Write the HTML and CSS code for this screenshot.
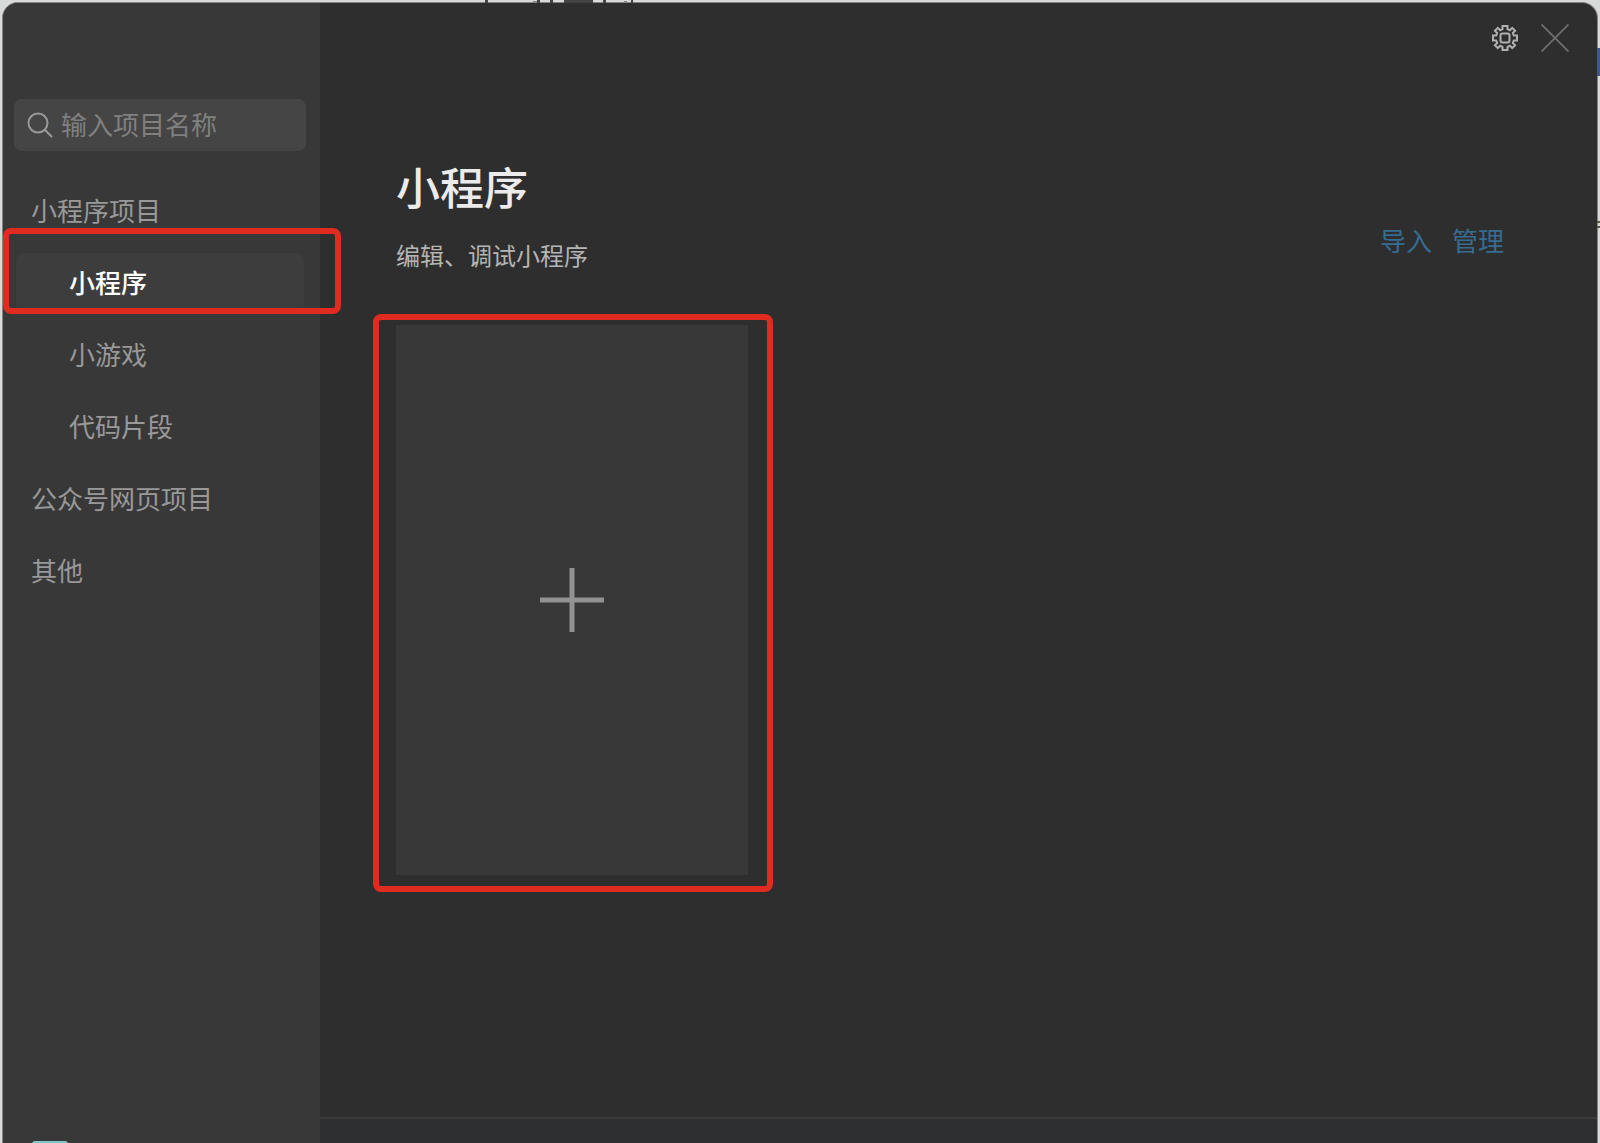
FILE: index.html
```
<!DOCTYPE html>
<html lang="zh-CN">
<head>
    <meta charset="UTF-8">
    <meta name="viewport" content="width=device-width, initial-scale=1.0">
    <title>小程序</title>
    <link rel="stylesheet" href="styles.css">
</head>
<body>
    <!-- page behind the window -->
    <svg class="behind-top" width="160" height="3" viewBox="0 0 160 3" aria-hidden="true">
        <path fill="#444" d="M5 0h3v3H5zM57 0h3v3h-3zM70 0h3v3h-3zM84 0h29v3H84zM123 0h3v3h-3zM151 0h2v3h-2z"/>
        <path fill="#8a8a8a" d="M53 1h4v2h-4zM144 1h3v2h-3z"/>
    </svg>
    <svg class="behind-right" width="3" height="190" viewBox="0 0 3 190" aria-hidden="true">
        <path fill="#3f5a85" d="M0 0h3v28H0z"/>
        <path fill="#5c5a4c" d="M0 173h3v2H0zM0 178h3v2H0z"/>
    </svg>

    <div class="window">
        <aside class="sidebar">
            <label class="search">
                <svg width="26" height="26" viewBox="0 0 26 26" fill="none" stroke="#999" stroke-width="2" aria-hidden="true">
                    <circle cx="11" cy="11" r="9.5"/>
                    <path d="M17.8 17.8L25 25"/>
                </svg>
                <input type="text" placeholder="输入项目名称" aria-label="输入项目名称">
            </label>

            <nav class="menu">
                <a class="menu-item" href="#">小程序项目</a>
                <a class="menu-item sub active" href="#">小程序</a>
                <a class="menu-item sub" href="#">小游戏</a>
                <a class="menu-item sub" href="#">代码片段</a>
                <a class="menu-item" href="#">公众号网页项目</a>
                <a class="menu-item" href="#">其他</a>
            </nav>

            <div class="user">
                <div class="avatar"></div>
            </div>
        </aside>

        <main class="main">
            <div class="toolbar">
                <button class="icon-button" type="button" aria-label="设置">
                    <svg width="28" height="28" viewBox="0 0 28 28" fill="none" stroke="#b0b0b0" stroke-width="2">
                        <path d="M11.5 2h5v3.2l2.4 1 2.3-2.3 2.9 2.9-2.3 2.3 1 2.4H26v5h-3.2l-1 2.4 2.3 2.3-2.9 2.9-2.3-2.3-2.4 1V26h-5v-3.2l-2.4-1-2.3 2.3-2.9-2.9 2.3-2.3-1-2.4H2v-5h3.2l1-2.4-2.3-2.3 2.9-2.9 2.3 2.3 2.4-1z"/>
                        <rect x="9.5" y="9.5" width="9" height="9" rx="2"/>
                    </svg>
                </button>
                <button class="icon-button" type="button" aria-label="关闭">
                    <svg width="28" height="28" viewBox="0 0 28 28" fill="none" stroke="#6e6e6e" stroke-width="1.8">
                        <path d="M.5.5l27 27M27.5.5l-27 27"/>
                    </svg>
                </button>
            </div>

            <div class="content">
                <header class="page-header">
                    <div>
                        <h1>小程序</h1>
                        <p>编辑、调试小程序</p>
                    </div>
                    <div class="actions">
                        <a href="#">导入</a>
                        <a href="#">管理</a>
                    </div>
                </header>

                <button class="add-card" type="button" aria-label="新建小程序">
                    <svg width="64" height="64" viewBox="0 0 64 64" stroke="#929292" stroke-width="5">
                        <path d="M32 0v64M0 32h64"/>
                    </svg>
                </button>
            </div>

            <footer class="footer"></footer>
        </main>
    </div>
</body>
</html>
```
FILE: styles.css
```
* {
    margin: 0;
    padding: 0;
    box-sizing: border-box;
}

body {
    height: 100vh;
    padding: 2px 2px 0;
    overflow: hidden;
    background: #d8dada;
    color: #999;
    font-family: "Noto Sans CJK SC", sans-serif;
    font-size: 26px;
    line-height: 36px;
}

a {
    color: inherit;
    text-decoration: none;
}

button {
    border: none;
    background: none;
    cursor: pointer;
}

svg {
    display: block;
    flex-shrink: 0;
}

.behind-top {
    position: absolute;
    top: 0;
    left: 480px;
}

.behind-right {
    position: absolute;
    top: 48px;
    right: 0;
}

.window {
    display: flex;
    height: 100%;
    overflow: hidden;
    border: 1px solid #858585;
    border-bottom: none;
    border-radius: 16px 16px 0 0;
    background: #2e2e2e;
}

/* Sidebar */
.sidebar {
    display: flex;
    flex-direction: column;
    width: 317px;
    flex-shrink: 0;
    padding: 96px 14px 0 11px;
    background: #383838;
}

.search {
    display: flex;
    align-items: center;
    gap: 8px;
    height: 52px;
    padding: 0 13px;
    border-radius: 8px;
    background: #454545;
}

.search input {
    width: 100%;
    min-width: 0;
    padding-bottom: 2px;
    border: none;
    outline: none;
    background: none;
    color: #ccc;
    font: inherit;
}

.search input::placeholder {
    color: #808080;
    opacity: 1;
}

.menu {
    display: flex;
    flex-direction: column;
    gap: 12px;
    margin-top: 30px;
    padding: 0 2px;
}

.menu-item {
    position: relative;
    padding: 11px 15px 13px;
    border-radius: 8px;
}

.menu-item.sub {
    padding-left: 53px;
}

.menu-item.active {
    background: #3d3d3d;
    color: #fff;
    font-weight: 500;
}

/* Red highlight frames */
.menu-item.active::after,
.add-card::after {
    content: "";
    position: absolute;
    border: 6px solid #e02b20;
    border-radius: 8px;
    pointer-events: none;
}

.menu-item.active::after {
    inset: -25px -37px -1px -13px;
    z-index: 1;
}

.user {
    height: 2px;
    margin-top: auto;
    padding-left: 18px;
}

.avatar {
    width: 36px;
    height: 36px;
    border-radius: 3px;
    background: #7fc4cf;
}

/* Main area */
.main {
    display: flex;
    flex: 1;
    flex-direction: column;
    min-width: 0;
}

.toolbar {
    display: flex;
    justify-content: flex-end;
    gap: 22px;
    padding: 21px 28px 0;
}

.content {
    flex: 1;
    padding: 102px 93px 0 76px;
}

.page-header {
    display: flex;
    justify-content: space-between;
    align-items: flex-end;
}

.page-header h1 {
    color: #ebebeb;
    font-size: 44px;
    font-weight: 500;
    line-height: 64px;
}

.page-header p {
    margin-top: 19px;
    color: #b5b5b5;
    font-size: 24px;
}

.actions {
    display: flex;
    gap: 20px;
    padding-bottom: 15px;
    color: #366c92;
}

.add-card {
    position: relative;
    display: flex;
    align-items: center;
    justify-content: center;
    width: 352px;
    height: 550px;
    margin-top: 52px;
    background: #383838;
}

.add-card::after {
    inset: -11px -25px -17px -23px;
}

.footer {
    height: 26px;
    border-top: 2px solid #3a3a3b;
    background: #2e2f31;
}
```
